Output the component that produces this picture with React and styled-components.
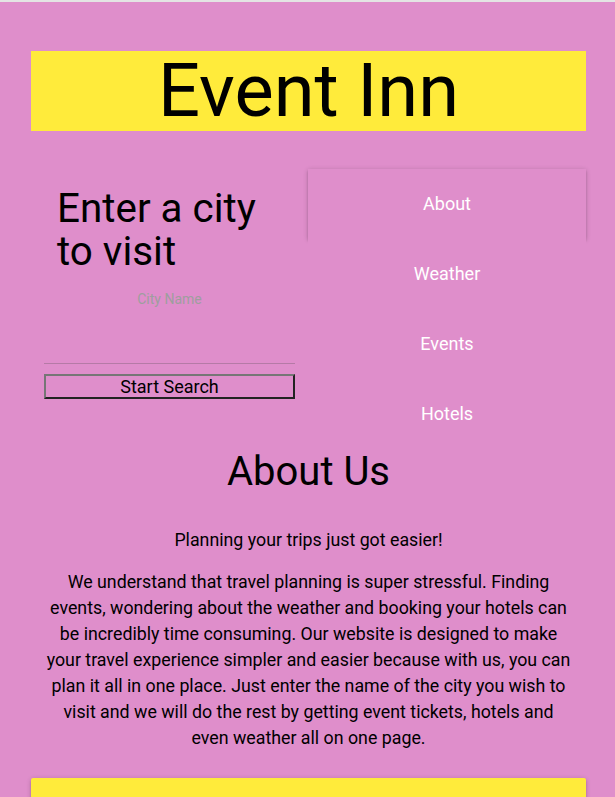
import React from "react";
import styled, { createGlobalStyle } from "styled-components";

const GlobalStyle = createGlobalStyle`
  html, body {
    margin: 0;
    padding: 0;
    background: #df8ecb;
  }
  body {
    font-family: Roboto, "Liberation Sans", Arial, sans-serif;
    color: #000;
  }
  * { box-sizing: border-box; }
`;

const Page = styled.div`
  min-height: 797px;
  border-top: 2px solid #e4e4e4;
  padding: 49px 29px 0 31px;
  overflow: hidden;
`;

const Banner = styled.header`
  background: #ffeb3b;
  height: 80px;
  display: flex;
  align-items: center;
  justify-content: center;
`;

const Brand = styled.h1`
  margin: 0;
  font-size: 74px;
  font-weight: 400;
  line-height: 80px;
`;

const Row = styled.section`
  display: grid;
  grid-template-columns: 251px 278px;
  column-gap: 13px;
  padding-left: 13px;
  margin-top: 38px;
`;

const SearchCol = styled.div`
  display: flex;
  flex-direction: column;
  padding-top: 18px;
`;

const SearchTitle = styled.h2`
  margin: 0;
  padding-left: 13px;
  font-size: 40.4px;
  font-weight: 400;
  line-height: 43px;
`;

const FieldLabel = styled.label`
  display: block;
  margin-top: 16px;
  text-align: center;
  font-size: 14px;
  line-height: 20px;
  color: #9e9e9e;
`;

const CityInput = styled.input`
  display: block;
  width: 100%;
  height: 55px;
  border: none;
  border-bottom: 1px solid #b57aa6;
  background: transparent;
  outline: none;
  font: inherit;
  text-align: center;
`;

const SearchButton = styled.button`
  margin-top: 10px;
  height: 25px;
  width: 100%;
  background: transparent;
  border: 2px solid;
  border-color: #767676 #222 #222 #767676;
  font-family: Roboto, "Liberation Sans", Arial, sans-serif;
  font-size: 18px;
  line-height: 19px;
  color: #000;
  padding: 0;
`;

const NavList = styled.ul`
  list-style: none;
  margin: 0;
  padding: 0;
`;

const NavItem = styled.li`
  height: 70px;
  display: flex;
  align-items: center;
  justify-content: center;
  padding-bottom: 2px;
  background: #df8ecb;
  color: #fff;
  font-size: 18px;
  box-shadow: ${(p) =>
    p.$elevated
      ? "0 2px 2px 0 rgba(0,0,0,0.14), 0 3px 1px -2px rgba(0,0,0,0.12), 0 1px 5px 0 rgba(0,0,0,0.2)"
      : "none"};
`;

const About = styled.section`
  text-align: center;
  padding: 0 13px;
`;

const AboutTitle = styled.h2`
  margin: 0;
  font-size: 40px;
  font-weight: 400;
  line-height: 46px;
`;

const Lead = styled.p`
  margin: 32px 0 0;
  font-size: 17.8px;
  line-height: 26px;
`;

const Body = styled.p`
  margin: 16px 0 0;
  font-size: 17.8px;
  line-height: 26px;
`;

const Footer = styled.footer`
  margin-top: 27px;
  height: 40px;
  background: #ffeb3b;
  border-radius: 2px;
  box-shadow: 0 2px 2px 0 rgba(0,0,0,0.14), 0 3px 1px -2px rgba(0,0,0,0.12), 0 1px 5px 0 rgba(0,0,0,0.2);
`;

const navItems = ["About", "Weather", "Events", "Hotels"];

export default function App() {
  return (
    <>
      <GlobalStyle />
      <Page>
        <Banner>
          <Brand>Event Inn</Brand>
        </Banner>
        <Row>
          <SearchCol>
            <SearchTitle>Enter a city to visit</SearchTitle>
            <FieldLabel htmlFor="city">City Name</FieldLabel>
            <CityInput id="city" type="text" />
            <SearchButton type="button">Start Search</SearchButton>
          </SearchCol>
          <nav>
            <NavList>
              {navItems.map((item, i) => (
                <NavItem key={item} $elevated={i === 0}>
                  {item}
                </NavItem>
              ))}
            </NavList>
          </nav>
        </Row>
        <About>
          <AboutTitle>About Us</AboutTitle>
          <Lead>Planning your trips just got easier!</Lead>
          <Body>
            We understand that travel planning is super stressful. Finding
            events, wondering about the weather and booking your hotels can be
            incredibly time consuming. Our website is designed to make your
            travel experience simpler and easier because with us, you can plan
            it all in one place. Just enter the name of the city you wish to
            visit and we will do the rest by getting event tickets, hotels and
            even weather all on one page.
          </Body>
        </About>
        <Footer />
      </Page>
    </>
  );
}
